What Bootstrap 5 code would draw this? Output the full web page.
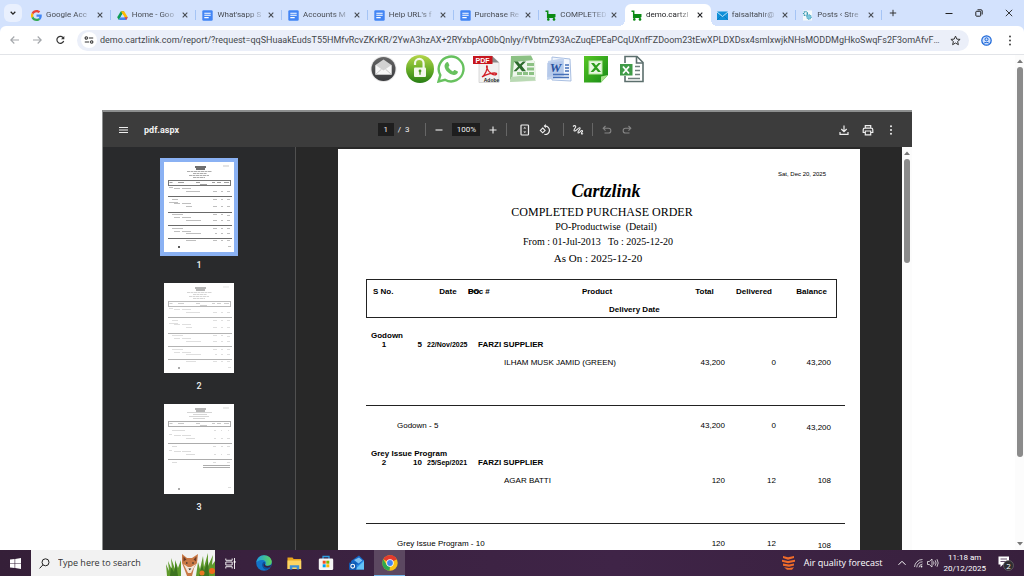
<!DOCTYPE html>
<html lang="en">
<head>
<meta charset="utf-8">
<meta name="viewport" content="width=device-width, initial-scale=1">
<title>demo.cartzlink.com</title>
<link href="https://cdn.jsdelivr.net/npm/bootstrap@5.3.0/dist/css/bootstrap.min.css" rel="stylesheet">
<style>
  body { font-family: Roboto, "Open Sans", sans-serif; font-size: 9px; line-height: 12px; background: #fff; color: #202124; }
  button { border: 0; padding: 0; background: none; color: inherit; display: inline-flex; align-items: center; justify-content: center; }
  input { border: 0; padding: 0; background: none; color: inherit; min-width: 0; }
  svg { display: block; flex: none; }

  /* browser chrome */
  .tab-strip { height: 26px; background: #d3e2fd; color: #474b52; }
  .tab-search { flex: none; width: 18px; height: 18px; margin: 0 3px 0 4px; border-radius: 6px; background: #e9f0fe; }
  .tab-item { flex: 1 1 0; min-width: 0; height: 22px; padding: 0 7px 0 6px; gap: 4px; position: relative; }
  .tab-item a { flex: 1 1 0; min-width: 0; overflow: hidden; white-space: nowrap; color: inherit; text-decoration: none; font-size: 8px;
    -webkit-mask-image: linear-gradient(90deg, #000 65%, rgba(0,0,0,.15)); mask-image: linear-gradient(90deg, #000 65%, rgba(0,0,0,.15)); }
  .tab-item.divided::after { content: ""; position: absolute; right: 0; top: 6px; width: 1px; height: 10px; background: #a5c4f5; }
  .tab-current { background: #fff; border-radius: 6px 6px 0 0; color: #202124; }
  .tab-current::before, .tab-current::after { content: ""; position: absolute; bottom: 0; width: 6px; height: 6px; }
  .tab-current::before { left: -6px; background: radial-gradient(circle at 0 0, transparent 6px, #fff 6px); }
  .tab-current::after { right: -6px; background: radial-gradient(circle at 100% 0, transparent 6px, #fff 6px); }
  .window-tools { flex: none; width: 142px; padding-left: 7px; }
  .window-tools .win-btn { width: 30px; height: 18px; }
  .nav-bar-wrap { background: #d3e2fd; }
  .address-row { height: 29px; background: #fff; border-radius: 6px 6px 0 0; border-bottom: 1px solid #e2e4e8; color: #44474c; }
  .nav-buttons { gap: 12px; padding: 0 11px 0 9px; }
  .address-pill { height: 21px; border-radius: 11px; background: #ebeff9; gap: 3px; }
  .address-pill input { font-size: 9px; text-overflow: ellipsis; outline: 0; }
  .site-info { width: 16px; height: 16px; border-radius: 50%; background: #fff; }

  /* page */
  .export-bar { gap: 8px; padding-bottom: 27px; }
  .export-bar .tight { margin-left: -5px; }
  .scroll-track { width: 9px; background: #fcfcfc; }
  .scroll-thumb { width: 6px; border-radius: 3px; background: #8b8b8b; }
  .viewer { margin: 0 103px 0 102px; border: solid #8d8f8f; border-width: 2px 0 0 1px; }
  .viewer .scroll-track { width: 10px; }
  .viewer-bar { height: 35px; padding: 0 16px; background: #3c3c3c; color: #f1f1f1; font-size: 8px; }
  .viewer-bar .bar-side { flex: 1 1 0; }
  .viewer-title { font-size: 9px; font-weight: 700; }
  .viewer-tools { gap: 8px; }
  .bar-line { width: 1px; height: 13px; background: #666; }
  .page-field { width: 16px; height: 13px; background: #1e1e1e; text-align: center; }
  .zoom-field { width: 28px; height: 13px; background: #1e1e1e; text-align: center; }
  .thumb-rail { width: 193px; background: #292a2c; border-right: 1px solid #505050; padding-top: 15px; color: #eee; }
  .thumb-page { display: block; width: 70px; height: 90px; background: #fff; }
  .thumb-page.chosen { box-shadow: 0 0 0 4px #8ab1f3; }
  .thumb-page.chosen svg { opacity: .8; }
  .thumb-page.faded svg { opacity: .4; }
  .thumb-label { line-height: 14px; margin: 6px 0 11px; font-size: 9px; font-weight: 500; }
  .page-stage { background: #282828; padding-top: 2px; }

  /* report sheet */
  .sheet { width: 522px; background: #fff; color: #000; font-family: "Liberation Sans", Arial, sans-serif; font-size: 8px; line-height: 9px; padding: 20px 15px 0 28px; }
  .print-date { font-size: 6px; line-height: 10px; padding-right: 19px; }
  .report-head { font-family: "Liberation Serif", "Times New Roman", serif; font-size: 10px; margin-left: -15px; }
  .brand-name { font-family: "Monotype Corsiva", "Liberation Serif", serif; font-style: italic; font-weight: 700; font-size: 18px; line-height: 24px; }
  .report-name { font-size: 12px; line-height: 18px; }
  .report-kind { line-height: 12px; }
  .report-span { line-height: 18px; }
  .as-on { font-size: 11px; line-height: 14px; }
  .report-table { width: 479px; table-layout: fixed; border-collapse: separate; border-spacing: 0; margin-top: 14px; }
  .report-table th, .report-table td { padding: 0; white-space: nowrap; vertical-align: top; }
  .report-table thead th { border: 0 solid #222; vertical-align: middle; }
  .head-top th { height: 23px; padding-top: 1px; }
  .report-table .head-top th:not(.outside) { border-top-width: 1px; }
  .head-low th { height: 16px; }
  .report-table .head-low th:not(.outside) { border-bottom-width: 1px; }
  .report-table thead .edge-left { border-left-width: 1px; padding-left: 6px; }
  .report-table thead .edge-right { border-right-width: 1px; }
  .report-table thead .delivery { padding-left: 242px; }
  .doc-head { position: relative; padding-left: 2px; }
  .doc-head .over { position: absolute; left: 2px; top: 0; }
  .report-table .group-first td { padding-top: 13px; }
  .report-table .group-name { padding-left: 5px; }
  .report-table .item-date { font-size: 7px; padding-left: 1px; }
  .report-table .item-no { padding-right: 4px; }
  .report-table .supplier { padding-left: 12px; }
  .report-table .item-line td { height: 57px; padding-top: 9px; border-bottom: 1px solid #222; }
  .report-table .item-line .product { padding-left: 2px; }
  .report-table .sum-line td { height: 43px; padding-top: 15px; }
  .report-table .sum-line .sum-name { padding-left: 31px; }
  .report-table .sum-line .sum-balance { padding-top: 17px; }

  /* taskbar */
  .taskbar { height: 26px; background: linear-gradient(90deg, #351f38, #3f2447 60%, #38203d); color: #fff; font-family: "Open Sans", "Noto Sans", sans-serif; }
  .start-btn { width: 31px; }
  .search-box { width: 184px; background: #f2f2f2; color: #333; }
  .search-box input { font-size: 9px; outline: 0; }
  .search-box input::placeholder { color: #333; opacity: 1; }
  .task-btn { width: 31px; height: 26px; }
  .task-open { background: #5c4861; border-bottom: 1px solid #76b9ed; }
  .clock { font-family: Roboto, sans-serif; font-size: 8px; line-height: 11px; }
</style>
</head>
<body class="vh-100 overflow-hidden d-flex flex-column">

<svg width="0" height="0" class="position-absolute" aria-hidden="true">
  <symbol id="i-close" viewBox="0 0 8 8"><path d="M1.7 1.7l4.6 4.6M6.3 1.7L1.7 6.3" stroke="currentColor" stroke-width="1.1"/></symbol>
  <symbol id="i-doc" viewBox="0 0 11 11"><rect x=".3" y=".3" width="10.4" height="10.4" rx="1.2" fill="#4285f4"/><path d="M2.3 3.2h6.4M2.3 5.3h6.4M2.3 7.6h4.4" stroke="#fff" stroke-width="1.1"/></symbol>
  <symbol id="i-cart" viewBox="0 0 11 11"><path d="M.5 1.200h2.200v6h7" fill="none" stroke="#0a8a14" stroke-width="1.500"/><path d="M2.700 4h7.800v3.200H2.700z" fill="#0a8a14"/><circle cx="3.300" cy="9.400" r="1.300" fill="#0a8a14"/><circle cx="9" cy="9.400" r="1.300" fill="#0a8a14"/></symbol>
  <symbol id="i-sheet" viewBox="0 0 70 90">
    <path d="M31 5h11M32 7h9" stroke="#111" stroke-width="1.500"/>
    <path d="M59 4h6" stroke="#bbb"/>
    <path d="M23 9.500h25M29 11.500h14M25 13.500h20M29 15.500h12" stroke="#999" stroke-dasharray="3 .5"/>
    <rect x="4.500" y="18.500" width="62" height="5" fill="none" stroke="#555"/>
    <path d="M5.500 20.500h3M14 20.500h6M32 20.500h4M48 20.500h3M53 20.500h4M60 20.500h5M36 22.500h7" stroke="#888"/>
    <path d="M4 34.500h64M4 50.500h64M4 63.500h64M4 76.500h64" stroke="#444"/>
    <path d="M5 25.500h4M10 26.500h6M18 26.500h9M22 29.500h14M8 37.500h6M5 40.500h9M10 41.500h6M18 41.500h9M22 44.500h6M8 52.500h11M10 55.500h6M18 55.500h9M22 58.500h15M8 66.500h11M10 69.500h6M18 69.500h9M22 71.500h15M22 78.500h10M49 29.500h4M57 29.500h2M63 29.500h3M49 37.500h4M57 37.500h2M63 37.500h3M49 44.500h4M57 44.500h2M63 44.500h3M49 52.500h4M57 52.500h2M63 53.500h3M49 58.500h4M57 58.500h2M63 58.500h3M49 66.500h4M57 66.500h2M63 66.500h3M51 71.500h2M57 71.500h2M63 71.500h3M49 78.500h4M57 78.500h2M63 78.500h3M64 84.500h3" stroke="#b0b0b0"/>
    <path d="M14 85h2" stroke="#333" stroke-width="2"/>
  </symbol>
</svg>

<header>
  <nav class="tab-strip d-flex align-items-end" aria-label="Tabs">
    <button class="tab-search mb-1" aria-label="Search tabs"><svg width="8" height="8" viewBox="0 0 8 8"><path d="M1.700 2.800L4 5.100 6.300 2.800" fill="none" stroke="#222" stroke-width="1.300"/></svg></button>
    <div class="d-flex flex-fill">
      <div class="tab-item divided d-flex align-items-center"><svg width="11" height="11" viewBox="0 0 48 48"><path fill="#ea4335" d="M24 9.500c3.500 0 6.700 1.200 9.200 3.600l6.900-6.900C35.900 2.400 30.500 0 24 0 14.600 0 6.500 5.400 2.600 13.200l8 6.200C12.400 13.700 17.700 9.500 24 9.500z"/><path fill="#4285f4" d="M47 24.600c0-1.600-.2-3.100-.4-4.600H24v9h12.900c-.6 3-2.200 5.500-4.700 7.200l7.700 6C44.400 38 47 31.800 47 24.600z"/><path fill="#fbbc05" d="M10.500 28.600a14.500 14.500 0 0 1 0-9.200l-8-6.200a24 24 0 0 0 0 21.600z"/><path fill="#34a853" d="M24 48c6.500 0 11.900-2.100 15.900-5.800l-7.700-6c-2.200 1.500-4.900 2.300-8.200 2.300-6.300 0-11.600-4.200-13.500-9.900l-8 6.200C6.500 42.600 14.600 48 24 48z"/></svg><a href="#">Google Acc</a><button aria-label="Close tab"><svg width="8" height="8"><use href="#i-close"/></svg></button></div>
      <div class="tab-item divided d-flex align-items-center"><svg width="11" height="11" viewBox="0 0 12 11"><path d="M4.200.8h3.600L4 7.200 2 10.400.2 7.300z" fill="#0f9d58"/><path d="M4.200.8h3.600l4 6.500H8.200z" fill="#ffba00"/><path d="M3.900 7.300h7.900L10 10.400H2z" fill="#4285f4"/><path d="M8.200 7.300h3.600L10 10.400z" fill="#ea4335"/><path d="M6 3.800l2.100 3.500H3.900z" fill="#d3e2fd"/></svg><a href="#">Home - Goo</a><button aria-label="Close tab"><svg width="8" height="8"><use href="#i-close"/></svg></button></div>
      <div class="tab-item divided d-flex align-items-center"><svg width="11" height="11"><use href="#i-doc"/></svg><a href="#">What'sapp S</a><button aria-label="Close tab"><svg width="8" height="8"><use href="#i-close"/></svg></button></div>
      <div class="tab-item divided d-flex align-items-center"><svg width="11" height="11"><use href="#i-doc"/></svg><a href="#">Accounts M</a><button aria-label="Close tab"><svg width="8" height="8"><use href="#i-close"/></svg></button></div>
      <div class="tab-item divided d-flex align-items-center"><svg width="11" height="11"><use href="#i-doc"/></svg><a href="#">Help URL's f</a><button aria-label="Close tab"><svg width="8" height="8"><use href="#i-close"/></svg></button></div>
      <div class="tab-item divided d-flex align-items-center"><svg width="11" height="11"><use href="#i-doc"/></svg><a href="#">Purchase Re</a><button aria-label="Close tab"><svg width="8" height="8"><use href="#i-close"/></svg></button></div>
      <div class="tab-item d-flex align-items-center"><svg width="11" height="11"><use href="#i-cart"/></svg><a href="#">COMPLETED</a><button aria-label="Close tab"><svg width="8" height="8"><use href="#i-close"/></svg></button></div>
      <div class="tab-item tab-current d-flex align-items-center"><svg width="11" height="11"><use href="#i-cart"/></svg><a href="#" aria-current="page">demo.cartzl</a><button aria-label="Close tab"><svg width="8" height="8"><use href="#i-close"/></svg></button></div>
      <div class="tab-item divided d-flex align-items-center"><svg width="11" height="11" viewBox="0 0 11 11"><rect y="1.500" width="11" height="8.500" rx=".6" fill="#0f8fd8"/><path d="M0 2l5.500 4.500L11 2" fill="none" stroke="#cdeafb" stroke-width=".9"/><path d="M0 10l4-4M11 10L7 6" stroke="#0a6cb0" stroke-width=".6"/></svg><a href="#">faisaltahir@</a><button aria-label="Close tab"><svg width="8" height="8"><use href="#i-close"/></svg></button></div>
      <div class="tab-item divided d-flex align-items-center"><svg width="11" height="11" viewBox="0 0 11 11"><rect x="1" y=".5" width="9" height="10" fill="#f4f9fb"/><circle cx="3.500" cy="3.500" r="1.900" fill="none" stroke="#1b8ba8" stroke-width="1.400" stroke-dasharray="1 .6"/><circle cx="7" cy="7" r="2.300" fill="#7cc6dc" stroke="#1b8ba8" stroke-width=".8" stroke-dasharray="1 .6"/></svg><a href="#">Posts ‹ Stre</a><button aria-label="Close tab"><svg width="8" height="8"><use href="#i-close"/></svg></button></div>
    </div>
    <div class="window-tools d-flex align-items-center align-self-center">
      <button class="me-auto" aria-label="New tab"><svg width="8" height="8" viewBox="0 0 8 8"><path d="M4 .8v6.400M.8 4h6.400" stroke="#333" stroke-width="1"/></svg></button>
      <button class="win-btn" aria-label="Minimise"><svg width="8" height="8" viewBox="0 0 8 8"><path d="M.5 4.500h7" stroke="#222"/></svg></button>
      <button class="win-btn" aria-label="Restore"><svg width="8" height="8" viewBox="0 0 8 8"><rect x=".8" y="2.300" width="4.900" height="4.900" rx=".8" fill="none" stroke="#222"/><path d="M2.500.8h3.500a1.200 1.200 0 0 1 1.200 1.200v3.500" fill="none" stroke="#222"/></svg></button>
      <button class="win-btn" aria-label="Close window"><svg width="8" height="8" viewBox="0 0 8 8"><path d="M.8.8l6.400 6.400M7.200.8L.8 7.200" stroke="#222" stroke-width=".9"/></svg></button>
    </div>
  </nav>
  <div class="nav-bar-wrap">
    <div class="address-row d-flex align-items-center">
      <div class="nav-buttons d-flex flex-shrink-0">
        <button aria-label="Back"><svg width="11" height="10" viewBox="0 0 11 10"><path d="M10 5H2M5.300 1.500L1.800 5l3.500 3.500" fill="none" stroke="#a3a6aa" stroke-width="1.100"/></svg></button>
        <button aria-label="Forward"><svg width="11" height="10" viewBox="0 0 11 10"><path d="M1 5h8M5.700 1.500L9.200 5 5.700 8.500" fill="none" stroke="#a3a6aa" stroke-width="1.100"/></svg></button>
        <button aria-label="Reload"><svg width="11" height="10" viewBox="0 0 10 10"><path d="M8.200 6A3.500 3.500 0 1 1 8 3.200" fill="none" stroke="#333" stroke-width="1.200"/><path d="M8.800.9v3.300H5.500z" fill="#333"/></svg></button>
      </div>
      <form class="address-pill d-flex align-items-center flex-fill ps-1 pe-2">
        <button type="button" class="site-info" aria-label="Site information"><svg width="10" height="10" viewBox="0 0 10 10"><g fill="none" stroke="#333" stroke-width="1.100"><circle cx="2.300" cy="3" r="1.200"/><path d="M4.800 3h4.400M.8 7h4.400"/><circle cx="7.700" cy="7" r="1.200"/></g></svg></button>
        <input class="flex-fill" aria-label="Address" value="demo.cartzlink.com/report/?request=qqSHuaakEudsT55HMfvRcvZKrKR/2YwA3hzAX+2RYxbpAO0bQnlyy/fVbtmZ93AcZuqEPEaPCqUXnfFZDoom23tEwXPLDXDsx4smIxwjkNHsMODDMgHkoSwqFs2F3omAfvFGKnd...">
        <button type="button" class="ms-1" aria-label="Bookmark"><svg width="11" height="11" viewBox="0 0 11 11"><path d="M5.500 1.100l1.300 3 3.300.3-2.500 2.100.8 3.200-2.900-1.700-2.900 1.700.8-3.200L.9 4.400l3.300-.3z" fill="none" stroke="#333"/></svg></button>
      </form>
      <div class="d-flex align-items-center gap-3 ps-2 pe-2 ms-1">
        <button aria-label="Profile"><svg width="11" height="11" viewBox="0 0 11 11"><circle cx="5.500" cy="5.500" r="4.700" fill="#cfe0fd" stroke="#1a66d8" stroke-width="1.200"/><circle cx="5.500" cy="4.300" r="1.500" fill="none" stroke="#1a66d8"/><path d="M2.600 8.600c1-1.600 4.800-1.600 5.800 0" fill="none" stroke="#1a66d8"/></svg></button>
        <button aria-label="Menu"><svg width="8" height="11" viewBox="0 0 8 11"><g fill="#444"><circle cx="2" cy="1.500" r="1"/><circle cx="2" cy="5.500" r="1"/><circle cx="2" cy="9.500" r="1"/></g></svg></button>
      </div>
    </div>
  </div>
</header>

<main class="d-flex flex-fill overflow-hidden">
  <div class="flex-fill d-flex flex-column overflow-hidden">
    <div class="export-bar d-flex justify-content-center">
      <a href="#" aria-label="Email"><svg width="28" height="28" viewBox="0 0 28 28"><defs><linearGradient id="gm" x2="0" y2="1"><stop stop-color="#666"/><stop offset="1" stop-color="#38393c"/></linearGradient></defs><circle cx="13.500" cy="14" r="13" fill="#e6e6e6"/><circle cx="13.500" cy="14" r="12" fill="url(#gm)"/><path d="M5.500 10l8-5.500 8 5.500v9.500h-16z" fill="#d2d2d2"/><path d="M5.500 10l8 5.500 8-5.500v9.500h-16z" fill="#f7f7f7"/><path d="M5.500 19.500l6-5.300M21.500 19.500l-6-5.300" stroke="#bbb" stroke-width=".8"/></svg></a>
      <a href="#" aria-label="Unlock"><svg width="28" height="28" viewBox="0 0 28 28"><defs><linearGradient id="gl" x2="0" y2="1"><stop stop-color="#b4d54a"/><stop offset=".5" stop-color="#6db02a"/><stop offset="1" stop-color="#267d14"/></linearGradient></defs><circle cx="14" cy="14" r="14" fill="url(#gl)"/><path d="M9 10V8.200a4.300 4.300 0 0 1 8.600 0V13" fill="none" stroke="#f4f8ec" stroke-width="2.200"/><rect x="8" y="12.500" width="12" height="9.500" rx="1" fill="#f4f8ec"/><circle cx="14" cy="16" r="1.400" fill="#4b9a20"/><path d="M14 16v3.800" stroke="#4b9a20" stroke-width="1.300"/></svg></a>
      <a href="#" class="tight" aria-label="WhatsApp"><svg width="28" height="28" viewBox="0 0 28 28"><path d="M1.500 26.500l1.800-6.400A12.400 12.400 0 1 1 8 24.800z" fill="#fff" stroke="#67c15e" stroke-width="2.400"/><path d="M9.700 7.200c.6-.4 1.300-.2 1.600.5l1 2.300c.2.500 0 .9-.9 2 .8 1.900 2.400 3.400 4.500 4.400 1-.9 1.300-1.700 2-1.400l2.500 1.200c.6.300.6.7.4 1.300-.5 1.700-2.400 2.800-4.200 2.500-4.600-.8-8.200-4.400-9-8-.4-2 .7-4 2.100-4.800z" fill="#67c15e"/></svg></a>
      <a href="#" aria-label="PDF"><svg width="28" height="28" viewBox="0 0 28 28"><path d="M6 1h13l7 6.500V27.500H6z" fill="#f1f1f1" stroke="#ccc" stroke-width=".7"/><path d="M19 1l7 6.500h-7z" fill="#8a8a8a"/><rect x="0" y="1" width="19.500" height="8" fill="#c7161d"/><text x="9.500" y="7.500" font-family="Liberation Sans" font-size="7" font-weight="700" fill="#fff" text-anchor="middle">PDF</text><path d="M9 22c3-2 6-8.500 5.200-11-.8-1.300-1.800 3.500 4.600 8 3 1.800 5.600.4 4.600-.6-2-1.200-10.500.8-14.400 3.600z" fill="none" stroke="#d21e26" stroke-width="1.300"/><text x="18.500" y="26.500" font-family="Liberation Sans" font-size="5" font-weight="700" fill="#222" text-anchor="middle">Adobe</text></svg></a>
      <a href="#" aria-label="Excel"><svg width="28" height="28" viewBox="0 0 28 28"><path d="M3 3L26 6l1 20-26 1z" fill="#d9e8d5"/><path d="M2 1l20-.5 2 4L1 25z" fill="#8cc184"/><path d="M5 7l20-2 1.500 20L3 26z" fill="#eef6ec"/><path d="M2 22l9-1 15 1v3.500L1 27z" fill="#b9d9b3"/><g fill="#8cc184"><path d="M18 8h7v3h-7zM18 12.500h7v3h-7zM14 17h5v3h-5zM20 17h5v3h-5zM8 17h5v3H8z"/></g><path d="M5 6.500h3.800l2.200 2.800 3-2.800h3l-4.300 4.300 4.300 5.400h-4l-2.500-3.200-3.200 3.200H4.500l4.600-4.600z" fill="#2d6b2d"/></svg></a>
      <a href="#" aria-label="Word"><svg width="28" height="28" viewBox="0 0 28 28"><path d="M7 2l18 2 1 22-19-1z" fill="#f3f7fd" stroke="#a9bfe2"/><path d="M3 6l16-3v18L2 25z" fill="#c3d4ef"/><path d="M2 8l16-2v14L2 22z" fill="#a9c0e6" opacity=".55"/><path d="M20 10h4M20 13h4M20 16h4M8 19.500h16M8 22.500h16" stroke="#4670b8" stroke-width="1.300"/><text x="10.500" y="16.500" font-family="Liberation Serif" font-size="13" font-weight="700" font-style="italic" fill="#27509e" text-anchor="middle">W</text></svg></a>
      <a href="#" aria-label="Excel workbook"><svg width="28" height="28" viewBox="0 0 28 28"><defs><linearGradient id="gx" x2="1" y2="1"><stop stop-color="#57c624"/><stop offset="1" stop-color="#168a16"/></linearGradient></defs><path d="M3 1h24v19l-7 7.500H3z" fill="url(#gx)"/><path d="M27 20l-7 7.500v-6z" fill="#a7e38b"/><rect x="8" y="6" width="13" height="13" fill="#e9f7e2" stroke="#b7e6a2"/><path d="M10 8h3l2 2.500L17.500 8H20l-4 4.200 4 4.800h-3l-2-2.500-2.700 2.500H9.500l4-4.500z" fill="#2d9d1c"/></svg></a>
      <a href="#" aria-label="Spreadsheet"><svg width="28" height="28" viewBox="0 0 28 28"><path d="M8 1.500h12l6 6v19H8z" fill="#fff" stroke="#5c6f6d" stroke-width="1.600"/><path d="M19.500 1v7H26" fill="none" stroke="#5c6f6d" stroke-width="1.600"/><path d="M18 11.500h5M18 15.500h5M18 19.500h5M11 23.500h12" stroke="#6f807e" stroke-width="1.600"/><rect x="2" y="8" width="14" height="13" fill="#fff"/><rect x="3" y="9" width="12.500" height="11.500" fill="#3f9b47"/><path d="M6 11.500l6 7M12 11.500l-6 7" stroke="#fff" stroke-width="1.800"/></svg></a>
    </div>

    <section class="viewer d-flex flex-column flex-fill overflow-hidden" aria-label="PDF viewer">
      <div class="viewer-bar d-flex align-items-center flex-shrink-0">
        <div class="bar-side d-flex align-items-center gap-3">
          <button aria-label="Toggle sidebar"><svg width="9" height="8" viewBox="0 0 9 8"><path d="M0 1.500h9M0 4h9M0 6.500h9" stroke="#eee" stroke-width="1"/></svg></button>
          <span class="viewer-title">pdf.aspx</span>
        </div>
        <div class="viewer-tools d-flex align-items-center me-1">
          <label class="d-flex align-items-center gap-1"><input class="page-field" value="1" aria-label="Page number"> /&nbsp; 3</label>
          <span class="bar-line ms-2"></span>
          <button aria-label="Zoom out"><svg width="10" height="10" viewBox="0 0 10 10"><path d="M1.500 5h7" stroke="#eee" stroke-width="1.100"/></svg></button>
          <input class="zoom-field" value="100%" aria-label="Zoom level">
          <button aria-label="Zoom in"><svg width="10" height="10" viewBox="0 0 10 10"><path d="M1.500 5h7M5 1.500v7" stroke="#eee" stroke-width="1.100"/></svg></button>
          <span class="bar-line"></span>
          <span class="viewer-tools d-flex mx-1">
            <button aria-label="Fit to page"><svg width="12" height="12" viewBox="0 0 12 12"><rect x="2" y="1" width="7.500" height="10" rx=".8" fill="none" stroke="#eee" stroke-width="1.200"/><path d="M4.300 4.500L5.800 3l1.500 1.500zM4.300 7.500L5.800 9l1.500-1.500z" fill="#eee"/></svg></button>
            <button aria-label="Rotate"><svg width="12" height="12" viewBox="0 0 12 12"><path d="M6 2.100a4.200 4.200 0 1 1-.6 8.300" fill="none" stroke="#eee" stroke-width="1.200"/><path d="M6.800 0v4.200L4.600 2.100z" fill="#eee"/><path d="M3.700 4L6.100 6.400 3.700 8.800 1.300 6.400z" fill="none" stroke="#eee" stroke-width="1.100"/></svg></button>
          </span>
          <span class="bar-line"></span>
          <button aria-label="Draw"><svg width="12" height="12" viewBox="0 0 12 12"><path d="M1 2.500c1.500-1.500 3.600-.8 2.300 1.200C1.800 5.800 1.500 7.200 3 7c1.700-.3 3.500-4.200 5-3.200 1.200 1-3 3.600-2 5 1 1 3-3 4.300-2.200 1.100.8-1.600 2.200-.8 3.200.5.500 1 0 1.500-.5" fill="none" stroke="#eee" stroke-width="1.100"/></svg></button>
          <span class="bar-line"></span>
          <button aria-label="Undo"><svg width="12" height="12" viewBox="0 0 12 12"><path d="M4.500 2L2.200 4.300l2.300 2.300M2.500 4.300h5a2.300 2.300 0 0 1 0 4.700H3.500" fill="none" stroke="#858585" stroke-width="1.100"/></svg></button>
          <button aria-label="Redo"><svg width="12" height="12" viewBox="0 0 12 12"><path d="M7.500 2l2.300 2.300-2.300 2.300M9.500 4.300h-5a2.300 2.300 0 0 0 0 4.700h4" fill="none" stroke="#858585" stroke-width="1.100"/></svg></button>
        </div>
        <div class="bar-side d-flex align-items-center justify-content-end gap-2">
          <button class="me-1" aria-label="Download"><svg width="12" height="12" viewBox="0 0 12 12"><path d="M6 1.500v6M3.300 5L6 7.700 8.700 5M2 8v2.300h8V8" fill="none" stroke="#eee" stroke-width="1.200"/></svg></button>
          <button class="me-1" aria-label="Print"><svg width="12" height="12" viewBox="0 0 12 12"><g fill="none" stroke="#eee" stroke-width="1.200"><path d="M3.300 4V1.600h5.400V4M3 8.500H1.200V5.800c0-1 .6-1.600 1.500-1.600h6.600c.9 0 1.500.6 1.500 1.600v2.700H9"/><path d="M3.300 7h5.400v3.800H3.300z"/></g></svg></button>
          <button aria-label="More actions"><svg width="10" height="12" viewBox="0 0 10 12"><g fill="#eee"><circle cx="5" cy="2.300" r="1"/><circle cx="5" cy="6" r="1"/><circle cx="5" cy="9.700" r="1"/></g></svg></button>
        </div>
      </div>

      <div class="d-flex flex-fill overflow-hidden">
        <aside class="thumb-rail flex-shrink-0 d-flex flex-column align-items-center">
          <a href="#" class="thumb-page chosen" aria-label="Page 1"><svg width="70" height="90"><use href="#i-sheet"/></svg></a>
          <div class="thumb-label">1</div>
          <a href="#" class="thumb-page faded" aria-label="Page 2"><svg width="70" height="90"><use href="#i-sheet"/></svg></a>
          <div class="thumb-label">2</div>
          <a href="#" class="thumb-page faded" aria-label="Page 3"><svg width="70" height="90" viewBox="0 0 70 90">
            <path d="M31 5h11M32 7h9" stroke="#111" stroke-width="1.500"/><path d="M59 4h6" stroke="#999"/>
            <path d="M23 8.500h25M29 10.500h14M25 12.500h20M29 14.500h12" stroke="#999"/>
            <rect x="4.500" y="17.500" width="62" height="5" fill="none" stroke="#333"/>
            <path d="M5.500 19.500h3M14 19.500h6M32 19.500h4M48 19.500h3M53 19.500h4M60 19.500h5M36 21.500h7" stroke="#777"/>
            <path d="M4 39.500h64M4 55.500h64M39 61.500h27M39 63.500h27" stroke="#333"/>
            <path d="M8 26.500h13M5 30.500h3M10 31.500h7M18 31.500h9M22 34.500h9M8 42.500h5M5 46.500h3M10 47.500h7M18 47.500h9M22 50.500h9M8 58.500h5M50 26.500h2M57 26.500h1M64 26.500h1M50 34.500h2M57 34.500h2M63 34.500h3M49 42.500h3M57 42.500h2M63 42.500h3M50 50.500h2M57 50.500h1M63 50.500h3M49 58.500h3M63 58.500h3M64 83.500h3" stroke="#aaa"/>
            <path d="M14 85h2" stroke="#333" stroke-width="2"/></svg></a>
          <div class="thumb-label">3</div>
        </aside>

        <div class="page-stage flex-fill d-flex justify-content-center overflow-hidden">
          <article class="sheet flex-shrink-0">
            <div class="print-date text-end">Sat, Dec 20, 2025</div>
            <div class="report-head text-center">
              <div class="brand-name ps-3">Cartzlink</div>
              <div class="report-name ps-2">COMPLETED PURCHASE ORDER</div>
              <div class="report-kind ps-3">PO-Productwise&nbsp; (Detail)</div>
              <div class="report-span">From : 01-Jul-2013&nbsp;&nbsp; To : 2025-12-20</div>
              <div class="as-on">As On : 2025-12-20</div>
            </div>
            <table class="report-table">
              <colgroup><col style="width:32px"><col style="width:28px"><col style="width:40px"><col style="width:36px"><col style="width:182px"><col style="width:41px"><col style="width:51px"><col style="width:55px"><col style="width:6px"><col style="width:8px"></colgroup>
              <thead>
                <tr class="head-top">
                  <th class="edge-left">S No.</th><th></th><th class="text-center pe-1 ps-2">Date</th>
                  <th><div class="doc-head">Doc #<span class="over">PO</span></div></th>
                  <th class="text-center ps-2">Product</th><th class="text-center">Total</th><th class="text-end pe-1">Delivered</th><th class="text-end pe-1">Balance</th><th class="edge-right"></th><th class="outside"></th>
                </tr>
                <tr class="head-low">
                  <th class="edge-left delivery" colspan="8">Delivery Date</th><th class="edge-right"></th><th class="outside"></th>
                </tr>
              </thead>
              <tbody>
                <tr class="group-first fw-bold"><td class="group-name" colspan="10">Godown</td></tr>
                <tr class="fw-bold"><td class="text-center ps-1">1</td><td class="item-no text-end">5</td><td class="item-date">22/Nov/2025</td><td class="supplier" colspan="7">FARZI SUPPLIER</td></tr>
                <tr class="item-line"><td colspan="4"></td><td class="product">ILHAM MUSK JAMID (GREEN)</td><td class="text-end">43,200</td><td class="text-end">0</td><td class="text-end">43,200</td><td colspan="2"></td></tr>
                <tr class="sum-line"><td class="sum-name" colspan="5">Godown - 5</td><td class="text-end">43,200</td><td class="text-end">0</td><td class="sum-balance text-end">43,200</td><td colspan="2"></td></tr>
                <tr class="fw-bold"><td class="group-name" colspan="10">Grey Issue Program</td></tr>
                <tr class="fw-bold"><td class="text-center ps-1">2</td><td class="item-no text-end">10</td><td class="item-date">25/Sep/2021</td><td class="supplier" colspan="7">FARZI SUPPLIER</td></tr>
                <tr class="item-line"><td colspan="4"></td><td class="product">AGAR BATTI</td><td class="text-end">120</td><td class="text-end">12</td><td class="text-end">108</td><td colspan="2"></td></tr>
                <tr class="sum-line"><td class="sum-name" colspan="5">Grey Issue Program - 10</td><td class="text-end">120</td><td class="text-end">12</td><td class="sum-balance text-end">108</td><td colspan="2"></td></tr>
              </tbody>
            </table>
          </article>
        </div>
        <div class="scroll-track d-flex flex-column align-items-center flex-shrink-0 pt-1">
          <svg width="6" height="4" viewBox="0 0 6 4"><path d="M0 4l3-3.500L6 4z" fill="#777"/></svg>
          <div class="scroll-thumb mt-1" style="height:26%"></div>
        </div>
      </div>
    </section>
  </div>
  <div class="scroll-track d-flex flex-column align-items-center flex-shrink-0 py-1">
    <svg width="6" height="4" viewBox="0 0 6 4"><path d="M0 4l3-3.500L6 4z" fill="#777"/></svg>
    <div class="scroll-thumb mt-1 mb-auto" style="height:80%"></div>
    <svg width="6" height="4" viewBox="0 0 6 4"><path d="M0 0l3 3.500L6 0z" fill="#777"/></svg>
  </div>
</main>

<footer class="taskbar d-flex align-items-stretch flex-shrink-0">
  <button class="start-btn" aria-label="Start"><svg width="11" height="11" viewBox="0 0 11 11"><path d="M0 1.600L4.600 1v4.200H0zM5.200.9L11 0v5.200H5.200zM0 5.800h4.600V10L0 9.400zM5.200 5.800H11V11l-5.800-.9z" fill="#fff"/></svg></button>
  <label class="search-box d-flex align-items-center ps-2">
    <svg width="11" height="11" viewBox="0 0 11 11"><circle cx="6.500" cy="4.300" r="3.500" fill="none" stroke="#222"/><path d="M4 6.800L.6 10.400" stroke="#222"/></svg>
    <input class="flex-fill ms-1 ps-1" type="search" placeholder="Type here to search" aria-label="Type here to search">
    <svg width="49" height="26" viewBox="0 0 49 26">
      <path d="M1 26L0 14l3 7-1-10 4 9-1-12 4 11 0-9 3 8 3-8v20zM30 26l2-14 2 7 3-13 1 11 4-14 0 13 5-11-1 10 3-4v15z" fill="#5f9a2c"/>
      <path d="M4 26l1-9 3 5 2-9 2 13M33 26l3-11 2 6 4-11 1 16" fill="#3d7420"/>
      <path d="M16 4l5 4h5l6-4-1 9-3 5-2 8h-5l-3-8-2-5z" fill="#c87845"/><path d="M17.500 6.500l3 3-3 2zM30.500 6.500l-3 3 2.500 2z" fill="#6a3b26"/>
      <path d="M17.500 14l4.500 3h3l5-3-3 5-2 4h-3l-2-4z" fill="#f2e3d6"/><path d="M22.300 18.500h3l-1.500 1.800z" fill="#222"/><circle cx="20.800" cy="13" r=".8" fill="#222"/><circle cx="27" cy="13" r=".8" fill="#222"/>
      <circle cx="36" cy="23" r="2.500" fill="#e87722"/><circle cx="46" cy="21" r="3" fill="#ef6c1a"/>
    </svg>
  </label>
  <button class="task-btn" aria-label="Task view"><svg width="11" height="11" viewBox="0 0 11 11"><g fill="none" stroke="#fff" stroke-width=".9"><path d="M.8.5v1.800h6.400V.5M.8 10.500V8.700h6.400v1.800M.8 4h6.400v3H.8zM9.500 0v11"/></g><path d="M8.700 3h1.800v1.800H8.700z" fill="#fff"/></svg></button>
  <button class="task-btn ps-1" aria-label="Edge"><svg width="16" height="16" viewBox="0 0 16 16"><defs><linearGradient id="ge" x2="1" y2="0"><stop stop-color="#1e9de0"/><stop offset="1" stop-color="#5fd35c"/></linearGradient></defs><circle cx="8" cy="8" r="7.800" fill="#1374c9"/><path d="M.3 7.500C1 3 4.300.2 8 .2c4.600 0 7.800 3.300 7.800 6.500 0 2.600-2 4-4.200 4-2 0-2.600-.8-2-1.700C10.500 7 8.700 5 6 5 3 5 .8 6.500.3 7.500z" fill="url(#ge)"/><path d="M9.200 8.200c-1 .8-.7 2.700 2.300 2.900 1.500 0 2.800-.5 3.800-1.300-1 3.300-3.300 4.800-5.300 5C7 14 4.800 10 7 7.500c1-.8 2.300-.6 2.200.7z" fill="#0c4f9d"/><path d="M9.200 8.500c-.7.900-.5 2.500 2.300 2.600 1.400 0 2.500-.3 3.600-1l-.9 1.800c-4 1.800-7 .1-6.500-2.600z" fill="#39203f"/></svg></button>
  <button class="task-btn ps-1" aria-label="File Explorer"><svg width="15" height="13" viewBox="0 0 15 13"><path d="M.5.500h5l1.200 1.500H14V12H.500z" fill="#e8a51f"/><path d="M.5 3.500h13.800V12H.5z" fill="#fcd462"/><path d="M2.800 12.500V8.200h9.400v4.300h-2.500V10.500H5.300v2z" fill="#3c8fd6"/></svg></button>
  <button class="task-btn ps-1" aria-label="Store"><svg width="16" height="16" viewBox="0 0 16 16"><path d="M5 4V1.500h6V4" fill="none" stroke="#2f9fe0" stroke-width="1.300"/><rect x=".8" y="3.500" width="14.400" height="11.500" rx="1.300" fill="#f5f5f5"/><path d="M4.700 5.700h3v3h-3z" fill="#f25022"/><path d="M8.300 5.700h3v3h-3z" fill="#7fba00"/><path d="M4.700 9.300h3v3h-3z" fill="#00a4ef"/><path d="M8.300 9.300h3v3h-3z" fill="#ffb900"/></svg></button>
  <button class="task-btn ps-1" aria-label="Outlook"><svg width="16" height="16" viewBox="0 0 16 16"><path d="M2 6l8-5.500 5 5V14H3z" fill="#1469c8"/><path d="M5 5l5-2.500 3.500 3-4 3z" fill="#7cc0f2"/><path d="M3 7l6 3 6-5v9.500H4z" fill="#2c8ee8"/><path d="M15 6v8.500H6z" fill="#63c2f7"/><rect y="7.500" width="7.500" height="7.500" rx="1" fill="#0f58b0"/><circle cx="3.700" cy="11.200" r="1.900" fill="none" stroke="#fff" stroke-width="1.100"/></svg></button>
  <button class="task-btn task-open ms-1" aria-label="Chrome"><svg width="16" height="16" viewBox="0 0 16 16"><circle cx="8" cy="8" r="7.700" fill="#fbc116"/><path d="M8 8L1.300 4.200A7.700 7.700 0 0 1 14.700 4.200z" fill="#e33b2e"/><path d="M8 .3a7.700 7.700 0 0 1 6.700 3.900H8z" fill="#e33b2e"/><path d="M1.300 4.200L4.700 10 8 11.500 7.500 15.700A7.700 7.700 0 0 1 1.300 4.200z" fill="#2da94f"/><circle cx="8" cy="8" r="3.700" fill="#fff"/><circle cx="8" cy="8" r="2.900" fill="#4285f4"/></svg></button>
  <div class="d-flex align-items-center ms-auto">
    <svg class="me-1" width="14" height="16" viewBox="0 0 14 16"><path d="M1 1l5 1.300 6-1.300v2L6 4.700 1 3zM0 4.800L6 6l7-1.200v2L6 8.300 0 6.800zM1 8.400l6 1 5-1v2l-5 1.300-6-1zM2 12.300l5 .7 5-.7-2 2.500H5z" fill="#ef6b2a"/></svg>
    <span class="ms-1">Air quality forecast</span>
    <button class="ms-3" aria-label="Show hidden icons"><svg width="8" height="8" viewBox="0 0 8 8"><path d="M.5 5.800L4 2.300l3.500 3.500" fill="none" stroke="#fff"/></svg></button>
    <button class="ms-2" aria-label="Network"><svg width="9" height="10" viewBox="0 0 9 10"><g fill="none" stroke="#eee" stroke-width=".8"><path d="M.5 9A8 8 0 0 1 8.500 1.500M2.700 9.300A6 6 0 0 1 8.500 3.800M5 9.400A4 4 0 0 1 8.500 6"/></g><circle cx="7.500" cy="8.500" r=".9" fill="#eee"/></svg></button>
    <button class="ms-1" aria-label="Volume"><svg width="12" height="10" viewBox="0 0 12 10"><path d="M.5 3.500h1.800L5 1v8L2.300 6.500H.5zM6.500 3.500q1 1.500 0 3M8.200 2.300q1.800 2.700 0 5.400M10 1.200q2.400 3.800 0 7.600" fill="none" stroke="#eee" stroke-width=".8"/></svg></button>
    <div class="clock text-center ms-1">11:18 am<br>20/12/2025</div>
    <button class="ms-2 me-2 ps-1" aria-label="2 notifications"><svg width="18" height="17" viewBox="0 0 18 17"><path d="M.5 1.500h10.500v8H5l-2.500 2.500V9.500h-2z" fill="#fff"/><path d="M2.500 4h6.500M2.500 6.500h6.500" stroke="#3f2447" stroke-width=".8"/><circle cx="10.500" cy="10.500" r="5" fill="#2e2e30" stroke="#777" stroke-width=".6"/><text x="10.500" y="13.500" font-family="Open Sans" font-size="8" fill="#fff" text-anchor="middle">2</text></svg></button>
  </div>
</footer>

<script src="https://cdn.jsdelivr.net/npm/bootstrap@5.3.0/dist/js/bootstrap.bundle.min.js"></script>
</body>
</html>
